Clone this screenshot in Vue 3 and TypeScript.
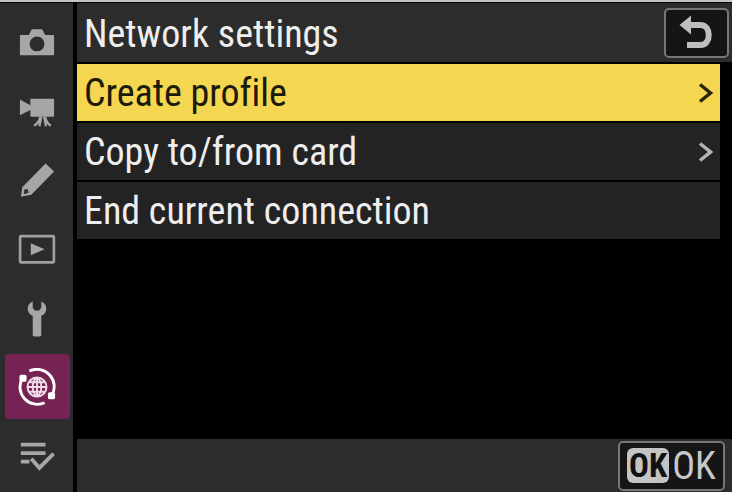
<script setup lang="ts">
import { ref } from 'vue'

interface MenuItem {
  label: string
  submenu: boolean
}

const items: MenuItem[] = [
  { label: 'Create profile', submenu: true },
  { label: 'Copy to/from card', submenu: true },
  { label: 'End current connection', submenu: false },
]

const selected = ref(0)

const tabs: string[] = ['photo', 'video', 'custom', 'playback', 'setup', 'network', 'mymenu']
const activeTab = ref('network')
</script>

<template>
  <div class="screen">
    <nav class="sidebar">
      <button
        v-for="tab in tabs"
        :key="tab"
        type="button"
        class="tab"
        :class="{ active: tab === activeTab }"
        @click="activeTab = tab"
      >
        <svg v-if="tab === 'photo'" viewBox="0 0 40 40" class="icon">
          <path
            fill-rule="evenodd"
            d="M3 12.500h8.500l3-6h11l3 6H37a1 1 0 0 1 1 1V33a1 1 0 0 1-1 1H3a1 1 0 0 1-1-1V13.500a1 1 0 0 1 1-1zM20 14.200a7.800 7.800 0 1 0 0 15.600a7.800 7.800 0 0 0 0-15.600z"
          />
        </svg>
        <svg v-else-if="tab === 'video'" viewBox="0 0 40 40" class="icon">
          <path d="M2 8l11 6v-6a1 1 0 0 1 1-1h23a1 1 0 0 1 1 1V25a1 1 0 0 1-1 1H14a1 1 0 0 1-1-1v-6L2 24.500z" />
          <path class="line" d="M23.500 26c-1 5-3.500 7.500-6.500 9.500M24.500 26l-2 10M27.500 26l2 10M28.500 26c1 5 3 7.500 6 9.500" />
        </svg>
        <svg v-else-if="tab === 'custom'" viewBox="0 0 40 40" class="icon">
          <path
            fill-rule="evenodd"
            d="M29 2.500L38 11L14 35.500L3 37.500L4.500 27.500zM7 29.500l-1 5.500l5-1.500l-.5-3.500z"
          />
        </svg>
        <svg v-else-if="tab === 'playback'" viewBox="0 0 40 40" class="icon">
          <rect class="frame" x="2.200" y="6.500" width="35.600" height="27.500" rx="1" />
          <path d="M13.500 14l14.500 6.300l-14.500 6.300z" />
        </svg>
        <svg v-else-if="tab === 'setup'" viewBox="0 0 40 40" class="icon">
          <path
            d="M15.500 2.500C11.500 4 9.500 8 10.500 12c.6 2.600 2.500 4.700 5 5.700V38a1.500 1.500 0 0 0 1.500 1.500h6a1.500 1.500 0 0 0 1.500-1.500V17.700c2.500-1 4.400-3.100 5-5.700c1-4-1-8-5-9.500V9l-2 3h-5l-2-3z"
          />
        </svg>
        <svg v-else-if="tab === 'network'" viewBox="0 0 40 40" class="icon">
          <path class="arc" d="M12 3.200A18.200 18.200 0 0 1 35.500 29M28 36.500A18.200 18.200 0 0 1 4.500 11" />
          <rect x="1.500" y="7" width="7.500" height="7.500" rx="2" />
          <rect x="31.500" y="25.500" width="7.500" height="7.500" rx="2" />
          <path
            class="globe"
            d="M20 10v20M10 20h20M12.500 15h15M12.500 25h15M20 10c-6 4-6 16 0 20c6-4 6-16 0-20M20 10a10 10 0 1 0 0 20a10 10 0 1 0 0-20"
          />
        </svg>
        <svg v-else viewBox="0 0 40 40" class="icon">
          <path class="list" d="M3 8h26M3 17h26M3 26h9" />
          <path class="list" d="M14 23l8.500 9.500L37.500 17.500" />
        </svg>
      </button>
    </nav>

    <main class="panel">
      <header class="header">
        <h1 class="title">Network settings</h1>
        <button type="button" class="back">
          <svg viewBox="0 0 36 36" class="back-icon">
            <path class="back-line" d="M10 10h11.500c11 0 11 20 0 20H8" />
            <path class="back-head" d="M.5 10L12 .5v19z" />
          </svg>
        </button>
      </header>

      <ul class="menu">
        <li v-for="(item, index) in items" :key="item.label">
          <button
            type="button"
            class="row"
            :class="{ selected: index === selected }"
            @click="selected = index"
          >
            <span>{{ item.label }}</span>
            <svg v-if="item.submenu" viewBox="0 0 16 22" class="chevron">
              <path d="M2 2.500L12.500 11L2 19.500" />
            </svg>
          </button>
        </li>
      </ul>

      <footer class="footer">
        <button type="button" class="confirm">
          <span class="badge">OK</span>
          <span>OK</span>
        </button>
      </footer>
    </main>
  </div>
</template>

<style>
body {
  background: #000;
}
</style>

<style scoped>
.screen {
  box-sizing: border-box;
  min-height: 100vh;
  display: flex;
  gap: 4px;
  padding-top: 1px;
  border-top: 2px solid #c4c4c6;
  background: #000;
  color: #eee;
  font-family: "Roboto Condensed", Roboto, "Liberation Sans", sans-serif;
  font-size: 38px;
  font-variant-ligatures: none;
  line-height: 48px;
}

button {
  margin: 0;
  border: 0;
  font: inherit;
  color: inherit;
  cursor: pointer;
}

.sidebar {
  box-sizing: border-box;
  flex: 0 0 73px;
  display: flex;
  flex-direction: column;
  align-items: center;
  gap: 4px;
  padding: 6px 0 0 1px;
  background: #2c2c2c;
}

.tab {
  display: flex;
  align-items: center;
  justify-content: center;
  width: 65px;
  height: 65px;
  padding: 0;
  border-radius: 4px;
  background: transparent;
}

.tab.active {
  background: #752353;
}

.icon {
  width: 38px;
  height: 38px;
  fill: #a6a6a6;
  stroke: none;
}

.active .icon {
  fill: #fff;
}

.line {
  fill: none;
  stroke: #a6a6a6;
  stroke-width: 2.4;
}

.frame {
  fill: none;
  stroke: #a0a0a0;
  stroke-width: 2.8;
}

.arc {
  fill: none;
  stroke: #fff;
  stroke-width: 3;
}

.globe {
  fill: none;
  stroke: #f0dce8;
  stroke-width: 2;
}

.list {
  fill: none;
  stroke: #a6a6a6;
  stroke-width: 4;
}

.panel {
  flex: 1;
  display: flex;
  flex-direction: column;
  min-width: 0;
}

.header {
  display: flex;
  align-items: center;
  justify-content: space-between;
  height: 59px;
  padding: 0 3px 0 7px;
  background: #2c2c2c;
}

.title {
  margin: 0;
  padding-top: 3px;
  font: inherit;
}

.back {
  display: flex;
  align-items: center;
  justify-content: center;
  box-sizing: border-box;
  width: 65px;
  height: 50px;
  padding: 0;
  border: 2px solid #777;
  border-radius: 5px;
  background: #151515;
}

.back-icon {
  width: 36px;
  height: 36px;
}

.back-line {
  fill: none;
  stroke: #bebebe;
  stroke-width: 6;
}

.back-head {
  fill: #bebebe;
}

.menu {
  display: flex;
  flex-direction: column;
  gap: 2px;
  margin: 2px 12px 0 0;
  padding: 0;
  list-style: none;
}

.row {
  display: flex;
  align-items: center;
  justify-content: space-between;
  box-sizing: border-box;
  width: 100%;
  height: 57px;
  padding: 1px 6px 0 7px;
  background: #232323;
  text-align: left;
}

.row.selected {
  background: #f5d650;
  color: #1c1a08;
}

.chevron {
  width: 16px;
  height: 22px;
  fill: none;
  stroke: #b4b4b4;
  stroke-width: 3.5;
}

.selected .chevron {
  stroke: #2a260c;
}

.footer {
  display: flex;
  align-items: center;
  justify-content: flex-end;
  height: 53px;
  margin-top: auto;
  padding-right: 7px;
  background: #2c2c2c;
}

.confirm {
  display: flex;
  align-items: center;
  justify-content: center;
  gap: 3px;
  box-sizing: border-box;
  width: 107px;
  height: 50px;
  padding: 0;
  border: 2px solid #777;
  border-radius: 5px;
  background: #151515;
  color: #c8c8c8;
}

.badge {
  width: 42px;
  border-radius: 6px;
  background: #c4c4c4;
  color: #111;
  font-size: 33px;
  font-weight: 700;
  line-height: 35px;
  text-align: center;
}
</style>
